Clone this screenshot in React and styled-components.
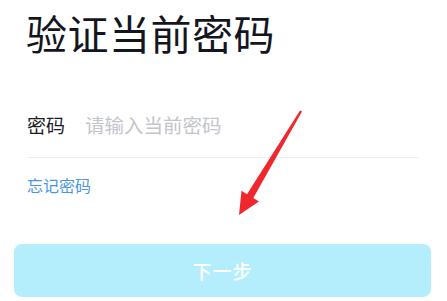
import React from "react";
import styled, { createGlobalStyle } from "styled-components";

const GlobalStyle = createGlobalStyle`
  html, body {
    margin: 0;
    padding: 0;
    background: #ffffff;
  }
  body {
    font-family: "Noto Sans CJK SC", "Noto Sans", sans-serif;
  }
`;

const Page = styled.div`
  position: relative;
  width: 447px;
  height: 301px;
  overflow: hidden;
  display: flex;
  flex-direction: column;
  background: #fff;
`;

const Title = styled.h1`
  margin: 0;
  padding: 4px 0 0 26px;
  font-size: 41px;
  line-height: 56px;
  font-weight: 400;
  color: #15151f;
  letter-spacing: 0.5px;
`;

const Field = styled.div`
  display: flex;
  align-items: center;
  margin: 44px 28px 0 27px;
  padding-bottom: 13px;
  border-bottom: 1px solid #eeeff2;
  height: 40px;
`;

const Label = styled.span`
  font-size: 19px;
  color: #1d1d26;
  width: 58px;
`;

const Input = styled.input`
  border: none;
  outline: none;
  flex: 1;
  padding: 0;
  font-family: inherit;
  font-size: 19.5px;
  color: #333;
  background: transparent;

  &::placeholder {
    color: #c3c5cc;
  }
`;

const Forgot = styled.a`
  margin: 16px 0 0 27px;
  font-size: 16px;
  line-height: 22px;
  color: #4c95e6;
  text-decoration: none;
  align-self: flex-start;
`;

const NextButton = styled.button`
  margin: 48px 16px 0 14px;
  height: 53px;
  border: none;
  border-radius: 8px;
  background: #b4eefc;
  color: #ffffff;
  font-family: inherit;
  font-size: 19px;
  font-weight: 500;
  letter-spacing: 1px;
`;

const Arrow = styled.svg`
  position: absolute;
  left: 0;
  top: 0;
  pointer-events: none;
`;

export default function App() {
  return (
    <>
      <GlobalStyle />
      <Page>
        <Title>验证当前密码</Title>
        <Field>
          <Label>密码</Label>
          <Input type="password" placeholder="请输入当前密码" />
        </Field>
        <Forgot href="#">忘记密码</Forgot>
        <NextButton disabled>下一步</NextButton>
        <Arrow width="447" height="301" viewBox="0 0 447 301">
          <polygon
            points="302,111.5 300,110.5 247,194.2 241.5,190.8 239,215 259,201.5 253.3,198"
            fill="#f0282d"
          />
        </Arrow>
      </Page>
    </>
  );
}
